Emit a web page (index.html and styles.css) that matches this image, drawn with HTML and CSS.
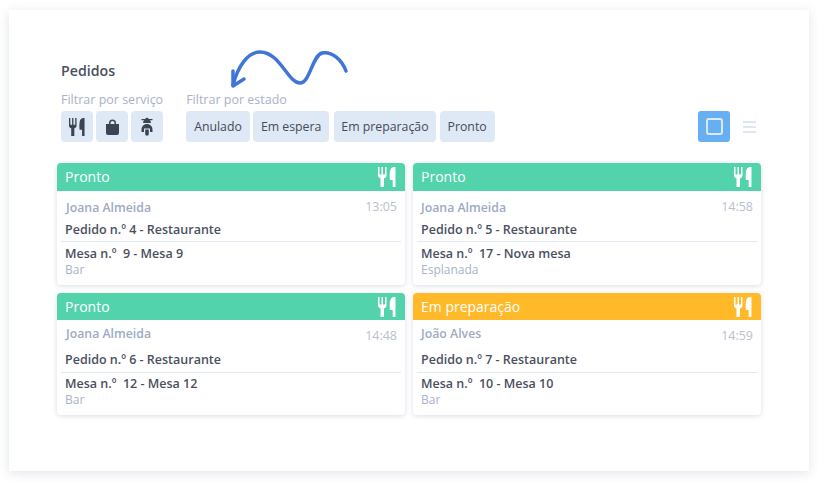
FILE: index.html
```html
<!DOCTYPE html>
<html lang="pt">
<head>
<meta charset="utf-8">
<title>Pedidos</title>
<link rel="stylesheet" href="styles.css">
</head>
<body>
<svg width="0" height="0" class="defs">
  <symbol id="cutlery" viewBox="0 0 18 20">
    <path d="M0 0h1.500v7.500h2V0h1.500v7.500h2V0h1.500v8.500c0 1.500-1 2.400-2.500 2.800V20H2.500v-8.700C1 10.900 0 10 0 8.500z"/>
    <path d="M12.300 3C13 1 14.500 0 16 0h1.500v20h-2.800v-7h-2.800C11.500 9.500 11.600 6 12.300 3z"/>
  </symbol>
</svg>
<main class="panel">
  <svg class="arrow" width="120" height="50" viewBox="0 0 120 50">
    <path class="arrow-line" d="M116 23C112 12 102 3 92 5C82 8 80 35 70 35C58 35 50 4 30 4C18 4 8 18 3 37"/>
    <path class="arrow-line" d="M3 23L3 38L14 31"/>
  </svg>
  <h1 class="title">Pedidos</h1>
  <div class="toolbar">
    <section class="filter">
      <div class="filter-label">Filtrar por serviço</div>
      <div class="btn-row">
        <button class="btn btn-icon"><svg class="ic-dark" width="16" height="18"><use href="#cutlery"/></svg></button>
        <button class="btn btn-icon">
          <svg class="ic-dark" width="15" height="16" viewBox="0 0 15 16"><path d="M4 5V4a3.500 3.500 0 0 1 7 0v1h3v9a2 2 0 0 1-2 2H3a2 2 0 0 1-2-2V5zm1.500 0h4V4a2 2 0 0 0-4 0z"/></svg>
        </button>
        <button class="btn btn-icon">
          <svg class="ic-dark" width="14" height="20" viewBox="0 0 14 20"><path d="M1.500 2h3.700a2 2 0 0 1 3.600 0h3.700v1.300H9.800c.8.6 1.200 1.500 1.200 2.700H3c0-1.200.4-2.100 1.200-2.700H1.500z"/><path d="M7 7c3.300 0 5.500 2.500 5.500 6v2H10v-3.500H4V15H1.500v-2c0-3.500 2.200-6 5.500-6z"/><path d="M5.200 12.500h3.600V17a1.800 1.800 0 0 1-3.600 0z"/></svg>
        </button>
      </div>
    </section>
    <section class="filter">
      <div class="filter-label">Filtrar por estado</div>
      <div class="btn-row">
        <button class="btn btn-text">Anulado</button>
        <button class="btn btn-text">Em espera</button>
        <button class="btn btn-text btn-wide">Em preparação</button>
        <button class="btn btn-text">Pronto</button>
      </div>
    </section>
    <div class="view-toggle">
      <button class="view-btn"><span class="view-square"></span></button>
      <div class="view-lines"><span></span><span></span><span></span></div>
    </div>
  </div>
  <div class="grid">
    <article class="card row-a">
      <header class="card-head green"><span>Pronto</span><svg class="ic-white" width="18" height="20"><use href="#cutlery"/></svg></header>
      <div class="card-top"><span class="waiter indent">Joana Almeida</span><span class="time">13:05</span></div>
      <div class="order">Pedido n.º 4 - Restaurante</div>
      <div class="card-foot">
        <div class="table">Mesa n.º&nbsp; 9 - Mesa 9</div>
        <div class="zone">Bar</div>
      </div>
    </article>
    <article class="card row-a">
      <header class="card-head green"><span>Pronto</span><svg class="ic-white" width="18" height="20"><use href="#cutlery"/></svg></header>
      <div class="card-top"><span class="waiter">Joana Almeida</span><span class="time">14:58</span></div>
      <div class="order">Pedido n.º 5 - Restaurante</div>
      <div class="card-foot">
        <div class="table">Mesa n.º&nbsp; 17 - Nova mesa</div>
        <div class="zone">Esplanada</div>
      </div>
    </article>
    <article class="card row-b">
      <header class="card-head green"><span>Pronto</span><svg class="ic-white" width="18" height="20"><use href="#cutlery"/></svg></header>
      <div class="card-top"><span class="waiter indent">Joana Almeida</span><span class="time">14:48</span></div>
      <div class="order">Pedido n.º 6 - Restaurante</div>
      <div class="card-foot">
        <div class="table">Mesa n.º&nbsp; 12 - Mesa 12</div>
        <div class="zone">Bar</div>
      </div>
    </article>
    <article class="card row-b">
      <header class="card-head amber"><span>Em preparação</span><svg class="ic-white" width="18" height="20"><use href="#cutlery"/></svg></header>
      <div class="card-top"><span class="waiter">João Alves</span><span class="time">14:59</span></div>
      <div class="order">Pedido n.º 7 - Restaurante</div>
      <div class="card-foot">
        <div class="table">Mesa n.º&nbsp; 10 - Mesa 10</div>
        <div class="zone">Bar</div>
      </div>
    </article>
  </div>
</main>
</body>
</html>
```

FILE: styles.css
```css
* { box-sizing: border-box; }
html, body { margin: 0; height: 100%; }
body {
  background: #fff;
  padding: 10px 15px 15px 9px;
  font-family: "Open Sans", "Noto Sans", sans-serif;
  color: #4a5060;
  overflow: hidden;
}
.defs { position: absolute; }
.panel {
  position: relative;
  width: 800px;
  height: 461px;
  background: #fff;
  box-shadow: 0 2px 10px rgba(70, 85, 120, .16);
  padding: 51px 48px 0;
}
.arrow { position: absolute; left: 221px; top: 38px; }
.arrow-line { fill: none; stroke: #3f74d8; stroke-width: 3.500; stroke-linecap: round; stroke-linejoin: round; }
.title { margin: 0 0 0 4px; font-size: 14.200px; line-height: 20px; font-weight: 550; color: #4a5060; }
.toolbar { display: flex; align-items: flex-end; margin-top: 11px; padding-left: 4px; }
.filter { margin-right: 23px; }
.filter-label { font-size: 12.500px; line-height: 16px; color: #a9b2ca; margin-bottom: 3px; white-space: nowrap; }
.btn-row { display: flex; gap: 3px; }
.btn {
  height: 31px;
  border: 0;
  border-radius: 4px;
  background: #dfe8f5;
  font: 500 12.300px "Open Sans", sans-serif;
  color: #454b5b;
  display: flex;
  align-items: center;
  justify-content: center;
  padding: 0;
}
.btn-icon { width: 32px; }
.btn-text { padding: 0 8px; }
.btn-wide { padding: 0 7px; margin: 0 1px 0 2px; }
.ic-dark { fill: #3d4354; }
.ic-white { fill: #fff; }
.view-toggle { margin-left: auto; margin-right: 5px; display: flex; align-items: center; gap: 13px; }
.view-btn {
  width: 32px;
  height: 31px;
  padding: 0;
  border: 0;
  border-radius: 3px;
  background: #66aff3;
  display: flex;
  align-items: center;
  justify-content: center;
}
.view-square { width: 17px; height: 17px; border: 2px solid #dce9f8; border-radius: 3px; }
.view-lines { width: 13px; display: flex; flex-direction: column; gap: 3px; }
.view-lines span { height: 2px; background: #dfe6f3; }
.grid {
  display: grid;
  grid-template-columns: 348px 348px;
  grid-auto-rows: 122px;
  column-gap: 8px;
  row-gap: 8px;
  margin-top: 21px;
}
.card {
  background: #fff;
  border-radius: 4px;
  box-shadow: 0 1px 5px rgba(70, 85, 120, .2);
  display: flex;
  flex-direction: column;
  overflow: hidden;
}
.card-head {
  flex: none;
  height: 28px;
  padding: 0 9px 0 8px;
  display: flex;
  align-items: center;
  justify-content: space-between;
  color: #fff;
  font-size: 14px;
}
.row-a .card-head span { margin-bottom: 2px; }
.row-b .card-head { height: 27px; }
.green { background: #52d3ac; }
.amber { background: #ffb929; }
.card-top { display: flex; justify-content: space-between; align-items: flex-start; padding: 0 8px; }
.row-a .card-top { height: 22px; padding-top: 8px; }
.row-a .waiter { margin-top: 1px; }
.row-b .card-top { height: 22px; padding-top: 6px; }
.row-b .time { margin-top: 2px; }
.waiter { font-size: 12.300px; line-height: 16px; font-weight: 650; color: #9eaac3; }
.indent { margin-left: 1px; }
.time { font-size: 12.500px; line-height: 16px; color: #b8c0d2; }
.order { padding: 0 8px; font-size: 12.500px; line-height: 16px; font-weight: 560; color: #4a5060; }
.row-a .order { margin-top: 9px; }
.row-b .order { margin-top: 10px; }
.card-foot { margin: 3px 4px 0; padding: 4px 4px 0; border-top: 1px solid #e3e9f2; }
.row-b .card-foot { margin-top: 4px; padding-top: 3px; }
.table { font-size: 12.500px; line-height: 16px; font-weight: 560; color: #4a5060; }
.zone { font-size: 12px; line-height: 14px; margin-top: 1px; color: #a9b2ca; }
```
